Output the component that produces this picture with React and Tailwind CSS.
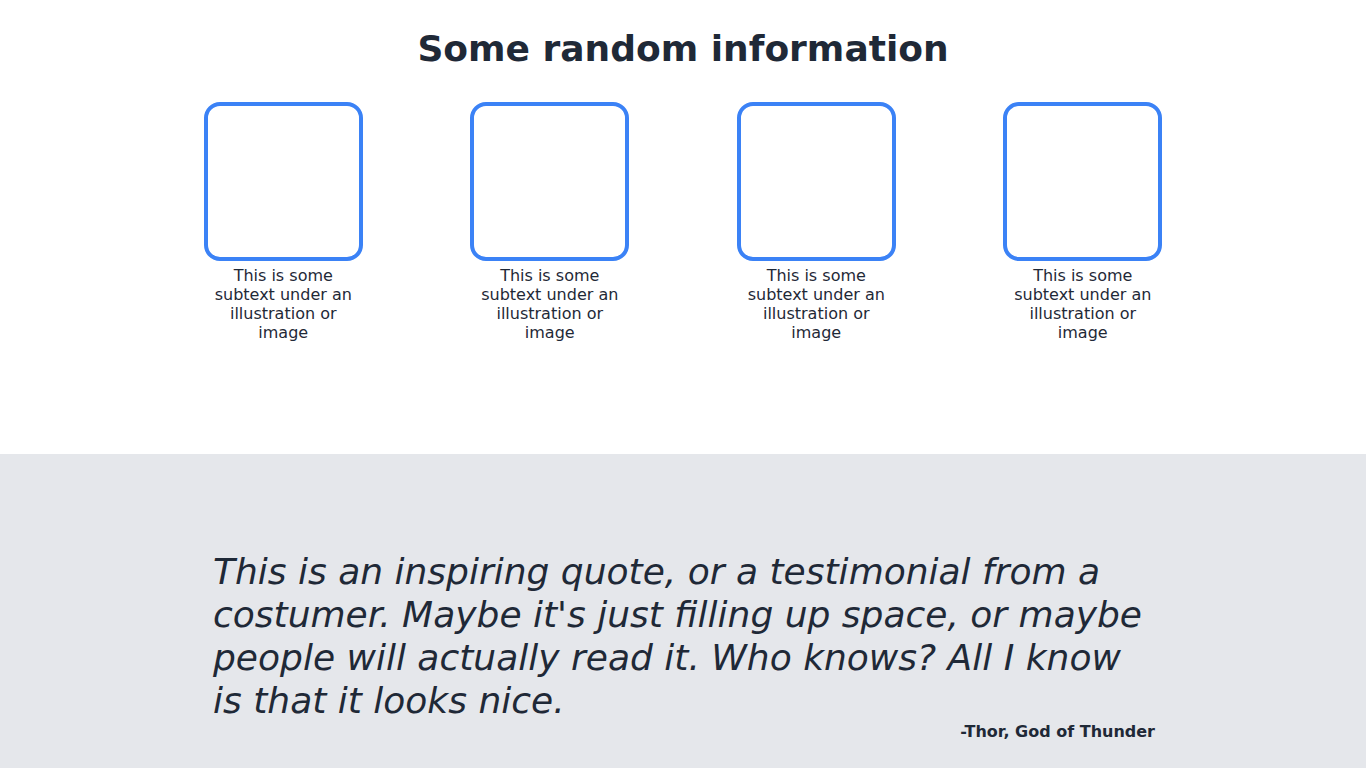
export default function App() {
  const items = [1, 2, 3, 4];
  return (
    <div className="min-h-screen bg-white font-['DejaVu_Sans',sans-serif] text-[#1f2937]">
      <section className="h-[454px] pt-[29px]">
        <h1 className="text-center text-4xl leading-10 font-bold">Some random information</h1>
        <div className="mx-auto mt-[33px] grid w-[1066px] grid-cols-4">
          {items.map((i) => (
            <div key={i} className="flex flex-col items-center">
              <div className="h-[159px] w-[159px] rounded-2xl border-4 border-[#3b82f6]" />
              <p className="mt-[5px] w-[150px] text-center text-base leading-[19px]">
                This is some subtext under an illustration or image
              </p>
            </div>
          ))}
        </div>
      </section>
      <section className="h-[314px] bg-[#e5e7eb] pt-[96px]">
        <div className="mx-auto w-[944px] pl-[2px]">
          <p className="text-4xl leading-[43px] italic">
            This is an inspiring quote, or a testimonial from a costumer. Maybe it's just filling up space, or maybe people will actually read it. Who knows? All I know is that it looks nice.
          </p>
          <p className="mt-[2px] text-right text-base leading-4 font-bold">-Thor, God of Thunder</p>
        </div>
      </section>
    </div>
  );
}
